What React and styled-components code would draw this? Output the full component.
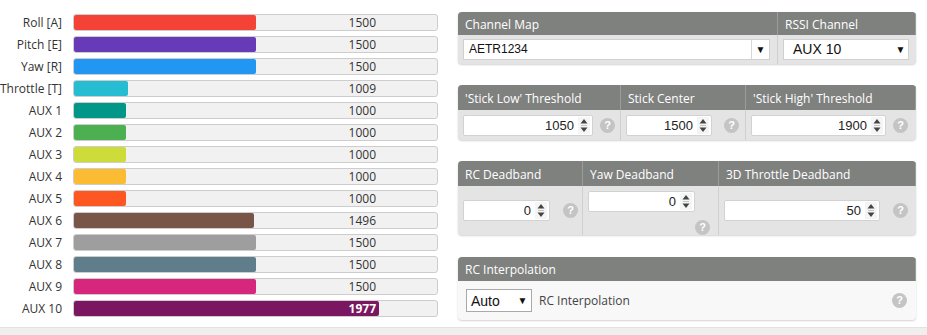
import React from "react";
import styled, { createGlobalStyle } from "styled-components";

/* ===== Global ===== */
const GlobalStyle = createGlobalStyle`
  html, body {
    margin: 0;
    padding: 0;
    background: #ffffff;
    font-family: "Open Sans", "Liberation Sans", sans-serif;
  }
  * { box-sizing: border-box; }
`;

const channels = [
  { name: "Roll [A]", value: 1500, color: "#f44336" },
  { name: "Pitch [E]", value: 1500, color: "#673ab7" },
  { name: "Yaw [R]", value: 1500, color: "#2196f3" },
  { name: "Throttle [T]", value: 1009, color: "#26bcd2" },
  { name: "AUX 1", value: 1000, color: "#009688" },
  { name: "AUX 2", value: 1000, color: "#4caf50" },
  { name: "AUX 3", value: 1000, color: "#cddc39" },
  { name: "AUX 4", value: 1000, color: "#fbbc34" },
  { name: "AUX 5", value: 1000, color: "#ff5722" },
  { name: "AUX 6", value: 1496, color: "#795548" },
  { name: "AUX 7", value: 1500, color: "#9e9e9e" },
  { name: "AUX 8", value: 1500, color: "#607d8b" },
  { name: "AUX 9", value: 1500, color: "#d6277c" },
  { name: "AUX 10", value: 1977, color: "#7b1660" },
];

const MIN = 800;
const MAX = 2200;
const TRACK_W = 365;

/* ===== Layout ===== */
const Content = styled.main`
  height: 327px;
  display: flex;
  gap: 20px;
  padding-top: 12px;
`;

const Footer = styled.footer`
  height: 8px;
  background: #efefef;
  border-top: 1px solid #e2e2e2;
`;

/* ===== Meters ===== */
const Meters = styled.section`
  display: flex;
  flex-direction: column;
  gap: 5px;
  padding-top: 2px;
`;

const MeterRow = styled.div`
  display: grid;
  grid-template-columns: 62px ${TRACK_W}px;
  column-gap: 11px;
  align-items: center;
  height: 17px;
`;

const MeterName = styled.span`
  text-align: right;
  font-size: 12px;
  color: #333;
  white-space: nowrap;
`;

const Track = styled.div`
  position: relative;
  height: 17px;
  border: 1px solid #cdcdcd;
  border-radius: 3px;
  background: #f1f1f1;
`;

const Fill = styled.div`
  height: 100%;
  border-radius: 2px;
  background: ${(p) => p.$color};
`;

const MeterValue = styled.span`
  position: absolute;
  right: 61px;
  top: 0;
  line-height: 15px;
  font-size: 12px;
  color: ${(p) => (p.$inside ? "#ffffff" : "#333")};
  font-weight: ${(p) => (p.$inside ? 700 : 400)};
`;

/* ===== Panels ===== */
const Side = styled.section`
  width: 458px;
  display: flex;
  flex-direction: column;
  gap: 21px;
`;

const Panel = styled.div`
  display: grid;
  grid-template-columns: ${(p) => p.$cols};
  grid-template-rows: ${(p) => p.$head || 25}px ${(p) => p.$body}px;
  margin-top: ${(p) => p.$mt || 0}px;
  border-radius: 4px;
  overflow: hidden;
  background: ${(p) => (p.$light ? "#f8f8f8" : "#e4e4e4")};
  box-shadow: 0 1px 2px rgba(0, 0, 0, 0.18);
`;

const Head = styled.div`
  display: flex;
  align-items: center;
  background: #7f817f;
  color: #fff;
  font-size: 12px;
  padding: 1px 7px 0;
  white-space: nowrap;
  border-right: 1px solid #9c9c9c;
  &:last-of-type { border-right: none; }
`;

const Cell = styled.div`
  display: flex;
  align-items: ${(p) => (p.$top ? "flex-start" : "center")};
  flex-direction: ${(p) => (p.$stack ? "column" : "row")};
  gap: ${(p) => (p.$stack ? "8px" : "0")};
  padding: ${(p) => p.$pad || "0 5px"};
  border-right: 1px solid ${(p) => (p.$last ? "transparent" : "#cfcfcf")};
`;

/* select */
const Select = styled.div`
  display: flex;
  align-items: center;
  width: ${(p) => p.$w}px;
  height: ${(p) => p.$h || 21}px;
  background: #fff;
  border: 1px solid ${(p) => (p.$dark ? "#a9a9a9" : "#d0d0d0")};
  font-family: "Liberation Sans", Arial, sans-serif;
  font-size: ${(p) => p.$fs || 12}px;
  color: #111;
`;

const SelectText = styled.span`
  flex: 1;
  padding-left: ${(p) => p.$pl || 5}px;
`;

const Arrow = styled.span`
  width: ${(p) => p.$aw || 18}px;
  height: 100%;
  display: flex;
  align-items: center;
  justify-content: center;
  border-left: 1px solid ${(p) => (p.$split ? "#d8d8d8" : "transparent")};
  font-size: 10px;
  color: #111;
`;

/* number */
const NumberBox = styled.div`
  display: flex;
  align-items: center;
  justify-content: flex-end;
  gap: 4px;
  width: ${(p) => p.$w}px;
  height: 21px;
  padding-right: 2px;
  background: #fff;
  border: 1px solid #d2d2d2;
  border-radius: 2px;
  font-family: "Liberation Sans", Arial, sans-serif;
  font-size: 13px;
  color: #222;
  flex-shrink: 0;
`;

const Spin = styled.svg`
  width: 12px;
  height: 17px;
  background: #f5f5f5;
`;

const Help = styled.span`
  width: 15px;
  height: 15px;
  border-radius: 50%;
  background: #c4c4c4;
  color: #fff;
  font-family: "Liberation Sans", Arial, sans-serif;
  font-weight: 700;
  font-size: 11px;
  line-height: 15px;
  text-align: center;
  flex-shrink: 0;
  margin-left: ${(p) => p.$ml || 0}px;
  align-self: ${(p) => p.$self || "auto"};
  margin-right: ${(p) => p.$mr || 0}px;
`;

const InlineLabel = styled.span`
  font-size: 12px;
  color: #444;
  margin-left: 7px;
  flex: 1;
`;

const Spinner = () => (
  <Spin viewBox="0 0 12 17">
    <polygon points="6,2 9.5,6.5 2.5,6.5" fill="#444" />
    <rect x="3" y="8" width="6" height="1" fill="#c4c4c4" />
    <polygon points="2.5,10.5 9.5,10.5 6,15" fill="#444" />
  </Spin>
);

const NumberInput = ({ value, w }) => (
  <NumberBox $w={w}>
    <span>{value}</span>
    <Spinner />
  </NumberBox>
);

export default function App() {
  return (
    <>
      <GlobalStyle />
      <Content>
        <Meters>
          {channels.map((c) => {
            const width = ((c.value - MIN) / (MAX - MIN)) * (TRACK_W - 2);
            return (
              <MeterRow key={c.name}>
                <MeterName>{c.name}</MeterName>
                <Track>
                  <Fill $color={c.color} style={{ width }} />
                  <MeterValue $inside={width > TRACK_W - 70}>{c.value}</MeterValue>
                </Track>
              </MeterRow>
            );
          })}
        </Meters>

        <Side>
          <Panel $cols="320px 138px" $head={23} $body={29}>
            <Head>Channel Map</Head>
            <Head>RSSI Channel</Head>
            <Cell $pad="2px 7px 3px 5px">
              <Select $w={308}>
                <SelectText>AETR1234</SelectText>
                <Arrow $split>▼</Arrow>
              </Select>
            </Cell>
            <Cell $last $pad="2px 6px 3px 5px">
              <Select $w={127} $fs={14}>
                <SelectText $pl={9}>AUX 10</SelectText>
                <Arrow $aw={16}>▼</Arrow>
              </Select>
            </Cell>
          </Panel>

          <Panel $cols="163px 125px 170px" $body={30}>
            <Head>'Stick Low' Threshold</Head>
            <Head>Stick Center</Head>
            <Head>'Stick High' Threshold</Head>
            <Cell>
              <NumberInput value={1050} w={130} />
              <Help $ml={7}>?</Help>
            </Cell>
            <Cell>
              <NumberInput value={1500} w={86} />
              <Help $ml={12}>?</Help>
            </Cell>
            <Cell $last>
              <NumberInput value={1900} w={135} />
              <Help $ml={7}>?</Help>
            </Cell>
          </Panel>

          <Panel $cols="125px 136px 197px" $body={49}>
            <Head>RC Deadband</Head>
            <Head>Yaw Deadband</Head>
            <Head>3D Throttle Deadband</Head>
            <Cell $pad="0 5px 0 5px">
              <NumberInput value={0} w={87} />
              <Help $ml={13}>?</Help>
            </Cell>
            <Cell $top $stack $pad="5px 7px 0 5px">
              <NumberInput value={0} w={107} />
              <Help $self="flex-end" $mr={1}>?</Help>
            </Cell>
            <Cell $last $pad="0 5px 0 5px">
              <NumberInput value={50} w={156} />
              <Help $ml={13}>?</Help>
            </Cell>
          </Panel>

          <Panel $cols="458px" $head={24} $body={39} $mt={1} $light>
            <Head>RC Interpolation</Head>
            <Cell $last $pad="0 8px 0 8px">
              <Select $w={66} $h={23} $fs={14} $dark>
                <SelectText $pl={4}>Auto</SelectText>
                <Arrow $aw={18}>▼</Arrow>
              </Select>
              <InlineLabel>RC Interpolation</InlineLabel>
              <Help>?</Help>
            </Cell>
          </Panel>
        </Side>
      </Content>
      <Footer />
    </>
  );
}
